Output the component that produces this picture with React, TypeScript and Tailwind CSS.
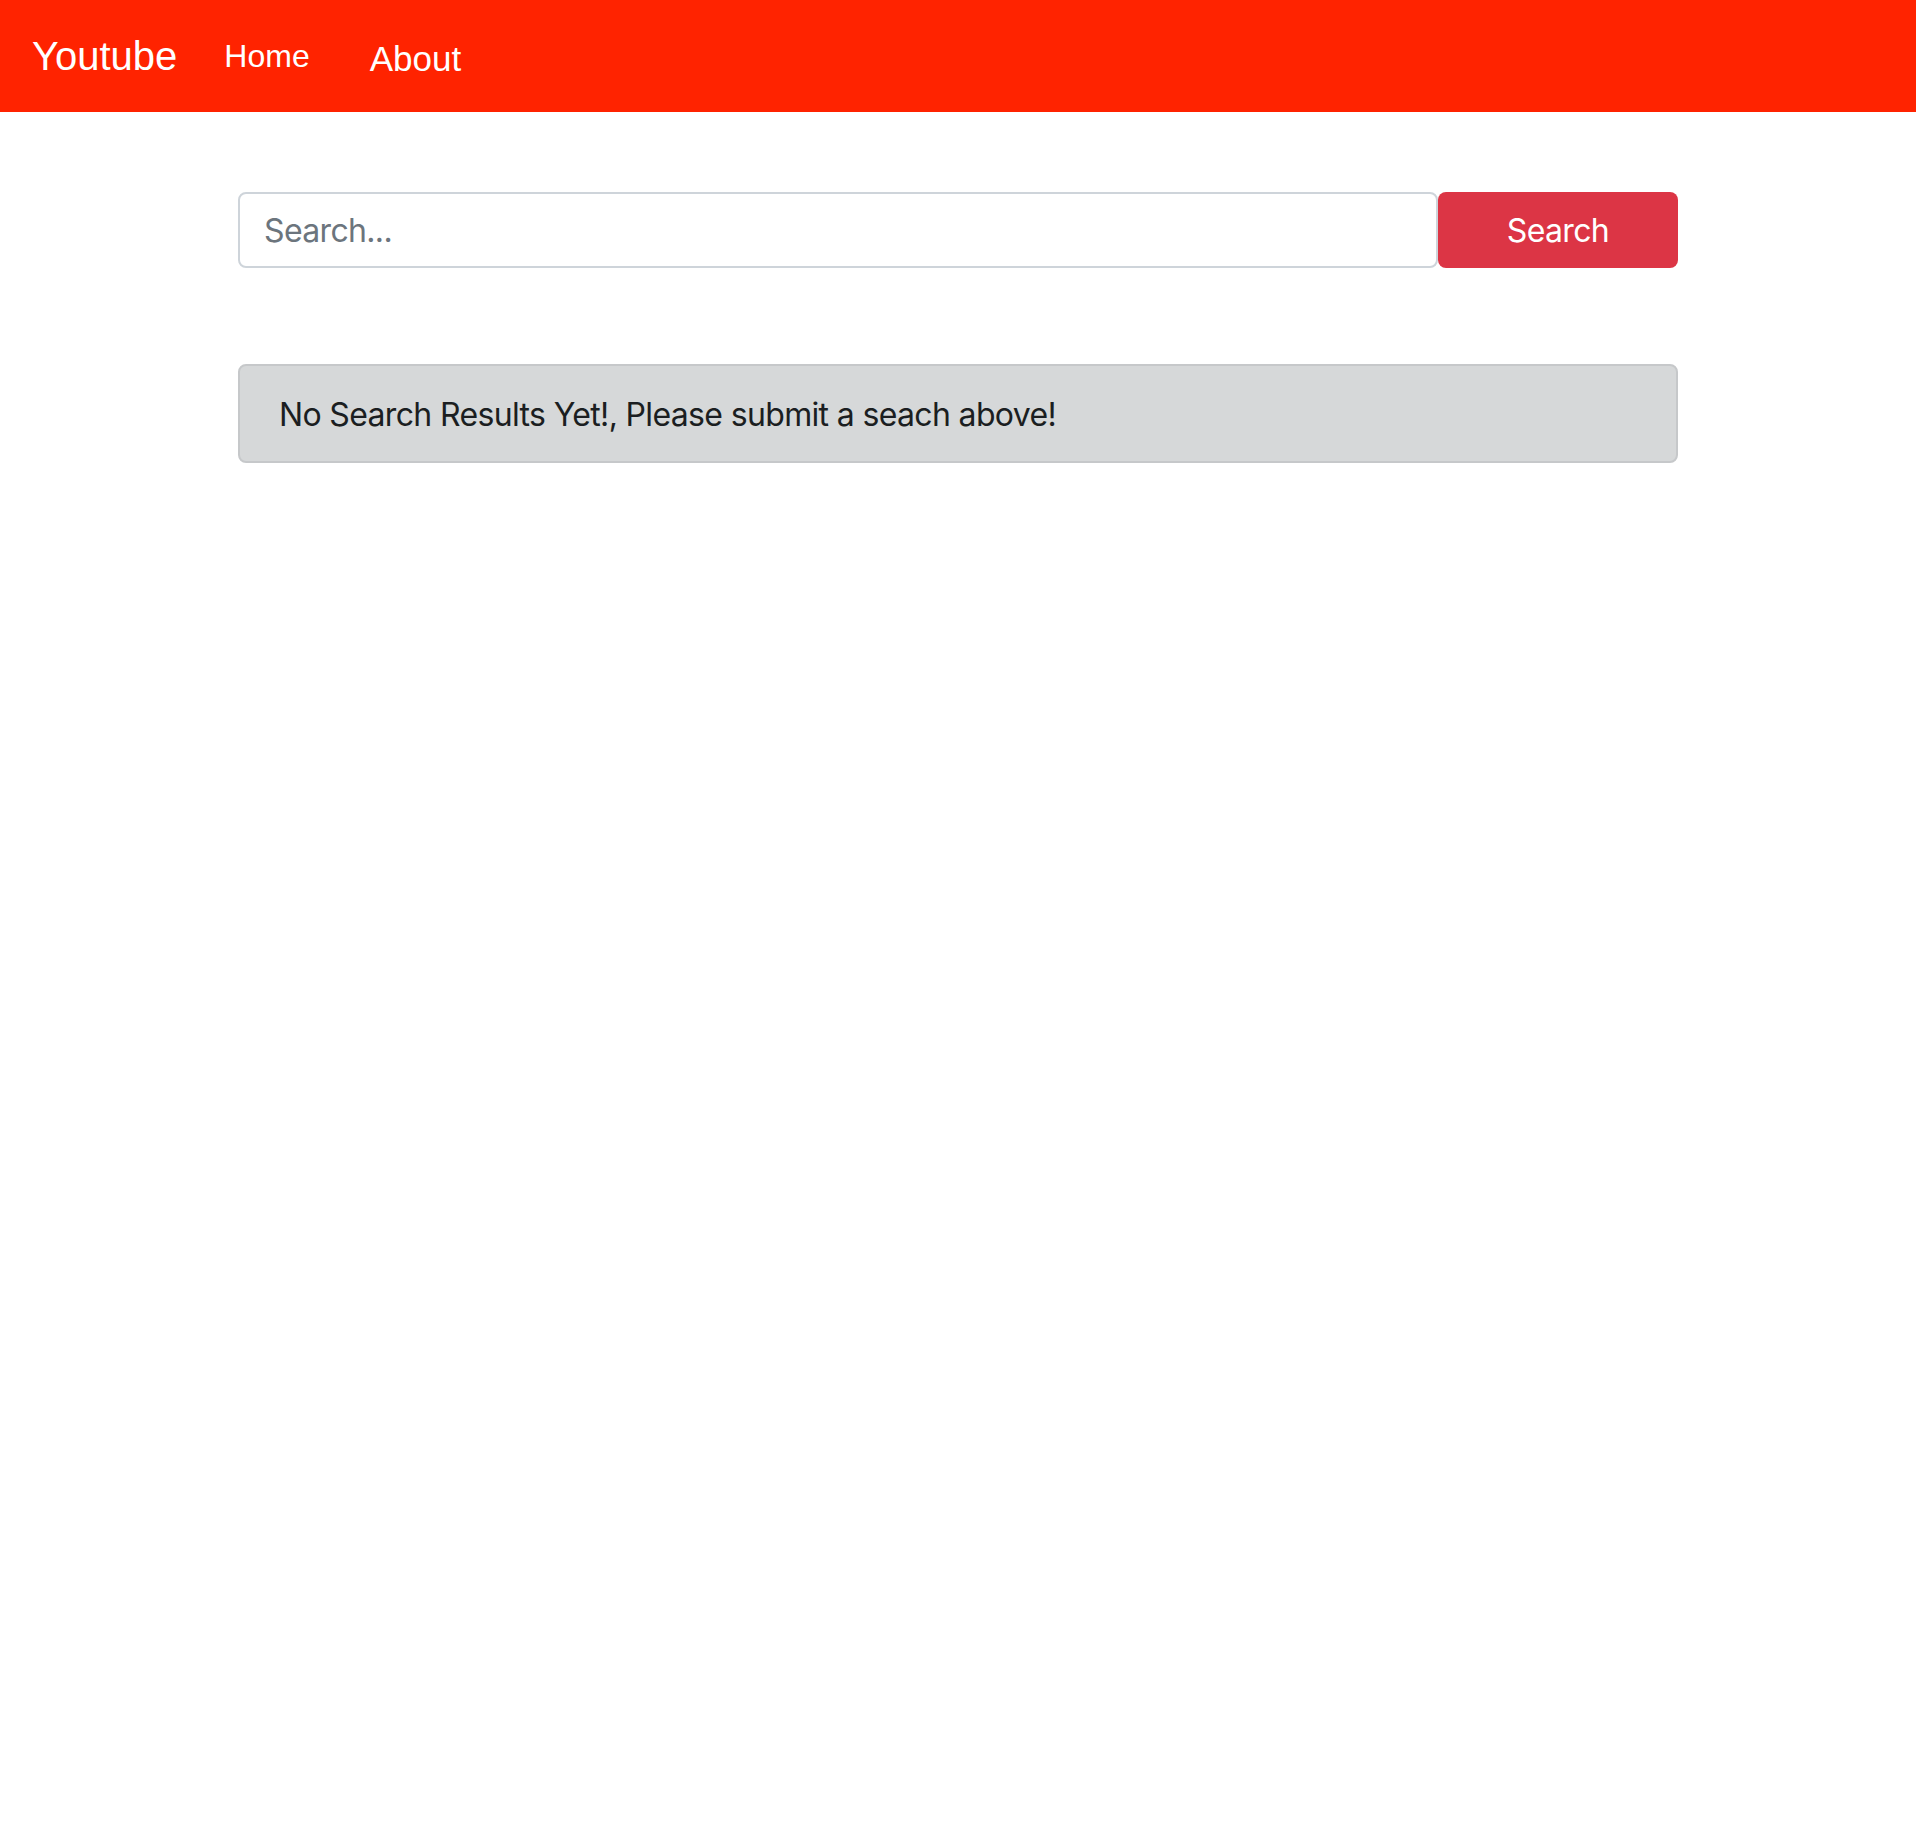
import React from "react";

export default function App() {
  return (
    <div className="min-h-[1840px] w-full bg-white">
      <nav
        className="flex h-[112px] items-start bg-[#ff2300] px-[32px] text-white"
        style={{ fontFamily: '"Liberation Sans", Arial, sans-serif' }}
      >
        <a className="mt-[36px] text-[40px] leading-none">Youtube</a>
        <a className="ml-[47px] mt-[40px] text-[32px] leading-none">Home</a>
        <a className="ml-[60px] mt-[41px] text-[35px] leading-none">About</a>
      </nav>
      <main
        className="mx-auto w-[1440px] pt-[80px] tracking-[-0.65px]"
        style={{ fontFamily: 'Inter, "Noto Sans", sans-serif' }}
      >
        <form className="flex h-[76px]" onSubmit={(e) => e.preventDefault()}>
          <input
            type="text"
            placeholder="Search..."
            className="h-full min-w-0 flex-1 rounded-[8px] border-2 border-[#ced4da] bg-white px-[24px] text-[32px] tracking-[-0.65px] text-[#495057] outline-none placeholder:text-[#6c757d]"
          />
          <button
            type="submit"
            className="h-full w-[240px] rounded-[8px] bg-[#dc3545] pt-[2px] text-[32px] tracking-[-0.65px] text-white"
          >
            Search
          </button>
        </form>
        <div className="mt-[96px] flex h-[99px] items-center rounded-[8px] border-2 border-[#c6c8ca] bg-[#d6d8d9] pl-[39px] pt-[3px] text-[32px] text-[#1b1e21]">
          No Search Results Yet!, Please submit a seach above!
        </div>
      </main>
    </div>
  );
}
